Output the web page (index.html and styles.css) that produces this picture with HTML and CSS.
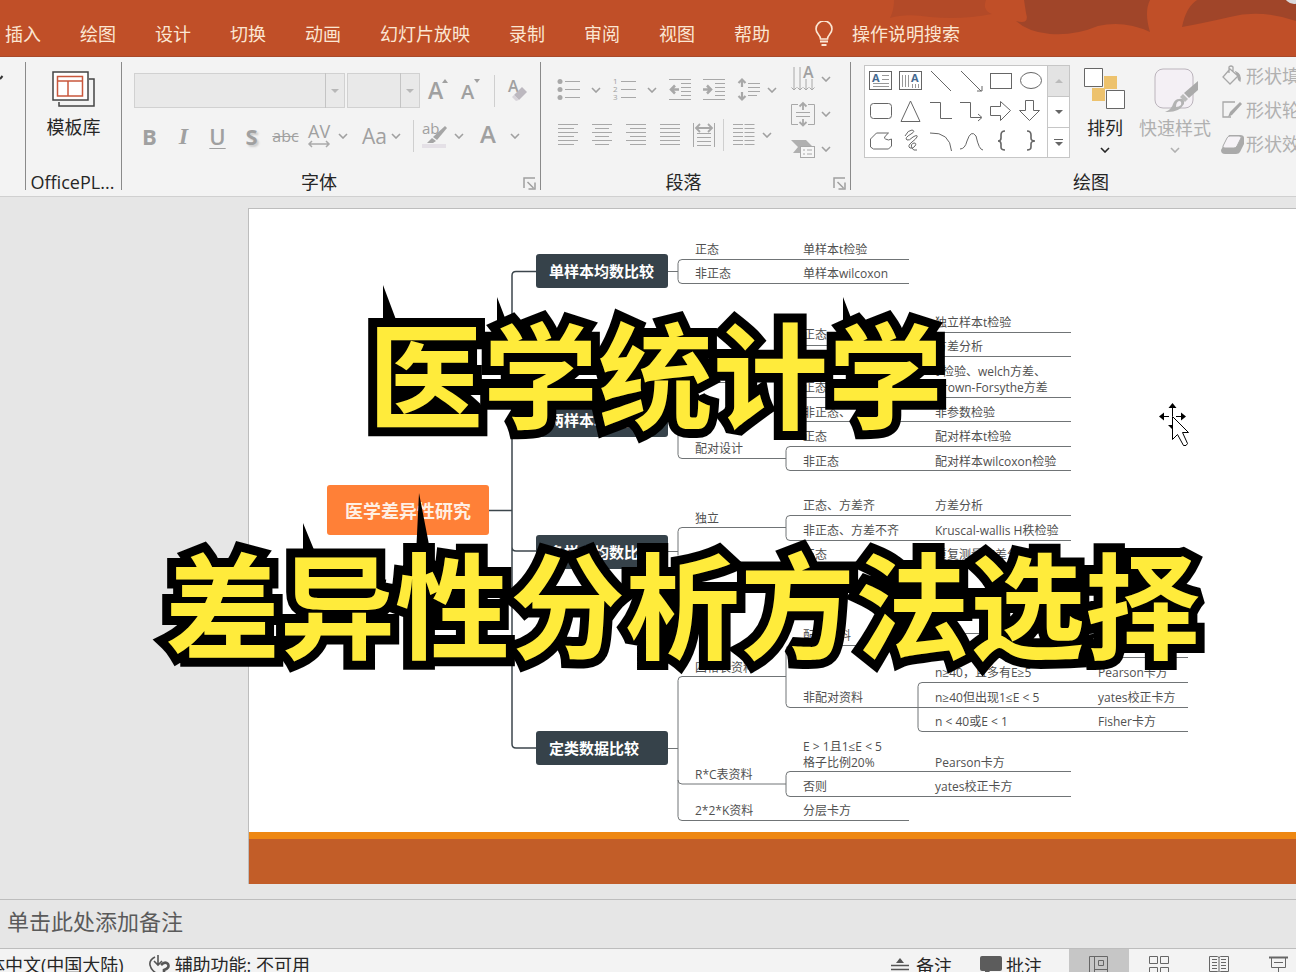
FILE: index.html
```html
<!DOCTYPE html>
<html lang="zh-CN">
<head>
<meta charset="utf-8">
<title>医学统计学 差异性分析方法选择</title>
<link rel="stylesheet" href="styles.css">
</head>
<body>
<svg class="defs" aria-hidden="true">
  <symbol id="chev" viewBox="0 0 10 6"><path d="M1 1l4 4 4-4" fill="none" stroke="currentColor" stroke-width="1.6"/></symbol>
  <symbol id="launch" viewBox="0 0 13 13"><path d="M1 11V1h11M4.500 5l6 6M12 5.500V12H5.500" fill="none" stroke="currentColor" stroke-width="1.500"/></symbol>
</svg>
<div class="app">
  <header class="titlebar">
    <svg class="swirl" viewBox="0 0 432 57" aria-hidden="true">
      <path d="M30 0h92q-4 10 6 14q-30 6-62 3q-24-4-40 1q4-8 4-18z" fill="#b34a28"/>
      <path d="M160 0h126q-6 12 0 32q-26-12-52-6q-24 10-48 8q-22-2-34-13q14 4 10-8z" fill="#a04529"/>
      <path d="M333 0h99v21q-36-12-66-4q-26 6-48 10q4-20 15-27z" fill="#a04529"/>
      <circle cx="430" cy="-6" r="10" fill="#d9d9dc"/>
    </svg>
    <nav class="tabs">
      <a href="#insert">插入</a><a href="#draw">绘图</a><a href="#design">设计</a><a href="#transition">切换</a><a href="#animation">动画</a><a href="#show">幻灯片放映</a><a href="#record">录制</a><a href="#review">审阅</a><a href="#view">视图</a><a href="#help">帮助</a>
      <a class="tellme" href="#search">
        <svg width="18" height="26" viewBox="0 0 18 26" fill="none" stroke="currentColor" stroke-width="1.600"><path d="M5.500 18c0-4-4.500-5-4.500-10a8 8 0 0 1 16 0c0 5-4.500 6-4.500 10z"/><path d="M5 20.500h8M6.500 24h5" stroke-width="2"/></svg>操作说明搜索</a>
    </nav>
  </header>

  <section class="ribbon">
    <div class="group edge"><svg width="3" height="6" viewBox="0 0 3 6"><path d="M0 4l2.500-3" stroke="#333" stroke-width="2"/></svg></div>

    <div class="group office">
      <div class="body">
        <button class="big">
          <svg width="43" height="38" viewBox="0 0 43 38" fill="none"><path d="M37 9h5v27H7v-4" stroke="#444" stroke-width="1.500"/><rect x="1" y="2" width="35" height="28" fill="#fff" stroke="#444" stroke-width="1.500"/><path d="M5.500 6.500h25v19.500h-25zM5.500 11h25M16 11v15" stroke="#c9573c" stroke-width="1.500"/></svg>
          <span>模板库</span>
        </button>
      </div>
      <div class="label">OfficePL...</div>
    </div>

    <div class="group font">
      <div class="body">
        <div class="row">
          <span class="combo family"><select aria-label="字体" disabled><option></option></select><i></i></span>
          <span class="combo size"><select aria-label="字号" disabled><option></option></select><i></i></span>
          <span class="fonttools">
            <button aria-label="增大字号"><svg width="20" height="24" viewBox="0 0 20 24"><text x="0" y="20" font-size="23" class="ic sb">A</text><path d="M14 4l3-4 3 4z" fill="#a0a0a0"/></svg></button>
            <button aria-label="减小字号"><svg width="20" height="24" viewBox="0 0 20 24"><text x="0" y="20" font-size="20" class="ic sb">A</text><path d="M13 0h6l-3 4z" fill="#a0a0a0"/></svg></button>
            <i class="sep"></i>
            <button aria-label="清除格式"><svg width="22" height="24" viewBox="0 0 22 24"><text x="0" y="13" font-size="16" class="ic sb">A</text><path d="M14 8l5 5-8 8-5-5z" fill="#bcb8bf"/><path d="M6 16l-2 2 4 4 3-1z" fill="#d8d4da"/></svg></button>
          </span>
        </div>
        <div class="row">
          <button class="fmt b">B</button><button class="fmt i">I</button><button class="fmt u">U</button><button class="fmt s">S</button><button class="fmt st">abc</button>
          <button class="split av" aria-label="字符间距"><svg width="24" height="24" viewBox="0 0 24 24"><text x="0" y="14" font-size="18" class="ic">AV</text><path d="M1 20h20M4 17l-3 3 3 3M18 17l3 3-3 3" fill="none" stroke="#aaa" stroke-width="1.500"/></svg><svg class="ch"><use href="#chev"/></svg></button>
          <button class="split aa"><span>Aa</span><svg class="ch"><use href="#chev"/></svg></button>
          <i class="sep"></i>
          <button class="split" aria-label="突出显示"><svg width="26" height="28" viewBox="0 0 26 28"><text x="0" y="12" font-size="15" class="ic">ab</text><path d="M23 4l2 2-10 12-4-3z" fill="#a5a5a5"/><path d="M10 16l4 3-3 2H5z" fill="#a5a5a5"/><rect x="0" y="22" width="24" height="4" fill="#e4e0e6"/></svg><svg class="ch"><use href="#chev"/></svg></button>
          <button class="split color" aria-label="字体颜色"><svg width="24" height="24" viewBox="0 0 24 24"><text x="4" y="19" font-size="24" class="ic sb">A</text></svg><svg class="ch"><use href="#chev"/></svg></button>
        </div>
      </div>
      <div class="label">字体</div>
      <button class="launcher" aria-label="字体设置"><svg width="13" height="13"><use href="#launch"/></svg></button>
    </div>

    <div class="group para">
      <div class="body cols">
        <div class="left">
          <div class="row wide">
            <button class="split far" aria-label="项目符号"><svg width="24" height="24" viewBox="0 0 24 24" class="ln"><path d="M8 3.500h15M8 11.500h15M8 19.500h15"/><g fill="#a8a8a8" stroke="none"><circle cx="3" cy="3.500" r="2.500"/><circle cx="3" cy="11.500" r="2.500"/><circle cx="3" cy="19.500" r="2.500"/></g></svg><svg class="ch"><use href="#chev"/></svg></button>
            <button class="split far" aria-label="编号"><svg width="24" height="24" viewBox="0 0 24 24" class="ln"><path d="M8 3.500h15M8 11.500h15M8 19.500h15"/><g class="ic" stroke="none" font-size="8"><text x="0" y="6">1</text><text x="0" y="14">2</text><text x="0" y="22">3</text></g></svg><svg class="ch"><use href="#chev"/></svg></button>
            <button aria-label="减少缩进"><svg width="22" height="24" viewBox="0 0 22 24" class="ln"><path d="M0 1.500h22M12 5.500h10M12 9.500h10M12 13.500h10M12 17.500h10M0 21.500h22"/><path d="M10 11.500H2M6 7.500l-4 4 4 4" stroke-width="2.500"/></svg></button>
            <button aria-label="增加缩进"><svg width="22" height="24" viewBox="0 0 22 24" class="ln"><path d="M0 1.500h22M12 5.500h10M12 9.500h10M12 13.500h10M12 17.500h10M0 21.500h22"/><path d="M0 11.500h8M4 7.500l4 4-4 4" stroke-width="2.500"/></svg></button>
            <button class="split" aria-label="行距"><svg width="24" height="24" viewBox="0 0 24 24" class="ln"><path d="M11 5.500h12M11 9.500h12M11 13.500h12M11 17.500h9"/><path d="M5 1v8M1.500 5L5 1.500 8.500 5M5 22v-8M1.500 18L5 21.500 8.500 18" stroke-width="2.200"/></svg><svg class="ch"><use href="#chev"/></svg></button>
          </div>
          <div class="row wide">
            <button aria-label="左对齐"><svg width="22" height="24" viewBox="0 0 22 24" class="ln"><path d="M1 1.500h20M1 5.500h16M1 9.500h20M1 13.500h16M1 17.500h20M1 21.500h16"/></svg></button>
            <button aria-label="居中"><svg width="22" height="24" viewBox="0 0 22 24" class="ln"><path d="M1 1.500h20M4 5.500h14M1 9.500h20M4 13.500h14M1 17.500h20M4 21.500h14"/></svg></button>
            <button aria-label="右对齐"><svg width="22" height="24" viewBox="0 0 22 24" class="ln"><path d="M1 1.500h20M5 5.500h16M1 9.500h20M5 13.500h16M1 17.500h20M5 21.500h16"/></svg></button>
            <button aria-label="两端对齐"><svg width="22" height="24" viewBox="0 0 22 24" class="ln"><path d="M1 1.500h20M1 5.500h20M1 9.500h20M1 13.500h20M1 17.500h20M1 21.500h20"/></svg></button>
            <button aria-label="分散对齐"><svg width="22" height="24" viewBox="0 0 22 24" class="ln"><path d="M.5 0v24M21.500 0v24M4 10.500h14M4 14.500h14M4 18.500h14M4 22.500h14"/><path d="M3 5h16M7 1L3 5l4 4M15 1l4 4-4 4" stroke-width="1.800"/></svg></button>
            <i class="sep tight"></i>
            <button class="split" aria-label="分栏"><svg width="24" height="24" viewBox="0 0 24 24" class="ln"><path d="M1 1.500h10M1 5.500h10M1 9.500h10M1 13.500h10M1 17.500h10M1 21.500h10M12.500 1.500h10M12.500 5.500h10M12.500 9.500h10M12.500 13.500h10M12.500 17.500h10M12.500 21.500h10"/></svg><svg class="ch"><use href="#chev"/></svg></button>
          </div>
        </div>
        <div class="stack">
          <button class="split" aria-label="文字方向"><svg width="24" height="26" viewBox="0 0 24 26" class="ln"><path d="M3 1v23M9 1v23M15 13v11M21 13v11M.5 21.500L3 24l2.500-2.500M6.500 21.500L9 24l2.500-2.500M12.500 21.500L15 24l2.500-2.500M18.500 21.500L21 24l2.500-2.500"/><text x="12" y="12" font-size="16" class="ic sb" stroke="none">A</text></svg><svg class="ch"><use href="#chev"/></svg></button>
          <button class="split" aria-label="对齐文本"><svg width="24" height="26" viewBox="0 0 24 26" class="ln"><path d="M7 3.500H.5v20H7M17 3.500h6.500v20H17M5 11.500h14M5 15.500h14"/><path d="M12 2v7M8.500 5.500L12 2l3.500 3.500M12 18v6M8.500 21L12 24.500l3.500-3.500" stroke-width="1.800"/></svg><svg class="ch"><use href="#chev"/></svg></button>
          <button class="split" aria-label="SmartArt"><svg width="24" height="26" viewBox="0 0 24 26" class="ln"><path d="M0 4h15l6 6H9v7H2l5-6z" fill="#b0b0b0" stroke="none"/><rect x="9.500" y="10.500" width="14" height="11" fill="#f7f7f7"/><path d="M12 14h2M16 14h5M12 18h2M16 18h5"/></svg><svg class="ch"><use href="#chev"/></svg></button>
        </div>
      </div>
      <div class="label">段落</div>
      <button class="launcher" aria-label="段落设置"><svg width="13" height="13"><use href="#launch"/></svg></button>
    </div>

    <div class="group drawing">
      <div class="body cols">
        <div class="gallery">
          <svg class="shapes" width="182" height="90" viewBox="865 66 182 90" fill="none" stroke="#666" stroke-width="1" role="img" aria-label="形状">
            <rect x="869.500" y="71.500" width="22" height="18"/><path d="M882 75.500h7M882 79.500h7M873 83.500h16M873 86.500h16" stroke="#999"/><text x="872" y="82" font-size="11" class="bl">A</text>
            <rect x="899.500" y="71.500" width="22" height="18"/><path d="M902.500 75v12M905.500 75v12M908.500 75v12M912.500 84v4M915.500 84v4M918.500 84v4" stroke="#999"/><text x="911" y="82" font-size="11" class="bl">A</text>
            <path d="M931 71l20 20M961 71l20 20M982 86v5h-5"/>
            <rect x="990.500" y="73.500" width="21" height="15"/><ellipse cx="1031" cy="80.500" rx="10.500" ry="8"/>
            <rect x="870.500" y="103.500" width="21" height="15" rx="3"/><path d="M910.500 101l9.500 20.500h-19z"/>
            <path d="M930 102.500h10.500v16H952M960 102.500h10.500v15H981M978 114l4 3.500-4 3.500"/>
            <path d="M990.500 106.500h10v-5l10 9-10 10v-5h-10zM1025.500 100.500h8v10h6l-10 10-10-10h6z"/>
            <path d="M870.500 147v-8l6-6h12q-6 5-3 6 3 2 6 0v7l-3 3h-15z"/>
            <path d="M905 136q3-6 7-6 4 1-1 4-7 4-4 6 2 1 6-3 5-3 4 0-1 2-5 5-5 4-2 6 3 1 5-2 2-3-1-3-4 1-2 5 1 3 5 2"/>
            <path d="M930 133q20-1 21.500 18M960 149q5 0 7-8 4-12 9-5 3 14 7 14"/>
            <path d="M1005 131q-4 0-4 4v3q0 3-3 3 3 0 3 3v3q0 3 4 3M1027 131q4 0 4 4v3q0 3 4 3-4 0-4 3v3q0 3-4 3" stroke-width="1.600"/>
          </svg>
          <div class="scroll"><button class="off" aria-label="上一行"><i class="tri up"></i></button><button aria-label="下一行"><i class="tri"></i></button><button class="more" aria-label="更多"><i class="tri"></i></button></div>
        </div>
        <button class="big arrange">
          <svg width="42" height="42" viewBox="0 0 42 42"><path d="M20 8h13v13H20zM8 20h13v13H8z" fill="#edc26d"/><path d="M.5.500h18v18H.5zM22.500 22.500h18v18h-18z" fill="#fff" stroke="#666"/></svg>
          <span>排列</span><svg class="ch"><use href="#chev"/></svg>
        </button>
        <button class="big quick">
          <svg width="46" height="46" viewBox="0 0 46 46"><rect x="3" y="1" width="38" height="39" rx="8" fill="#f4f0f5" stroke="#bbb4bc"/><path d="M46 13v9l-9 8-5-5z" fill="#aaa"/><path d="M31 26l5 5-3 3-5-5z" fill="#bbb"/><path d="M27 31q6-1 5 5-5 9-19 8 7-3 8-8 2-5 6-5z" fill="#b3b3b3"/><path d="M27 33q3 0 2 4-2 2-5 2 0-5 3-6z" fill="#f4f0f5"/></svg>
          <span>快速样式</span><svg class="ch"><use href="#chev"/></svg>
        </button>
        <div class="styles">
          <button><svg width="20" height="22" viewBox="0 0 20 22" fill="none" stroke="#a8a8a8" stroke-width="1.300"><path d="M8 4l8 7-8 8-7-7zM7 8V2q2-2 4 0v5"/><path d="M14 7q5 2 4 9-2-1-2-5z" fill="#a8a8a8"/></svg>形状填充</button>
          <button><svg width="20" height="22" viewBox="0 0 20 22" fill="none" stroke="#a8a8a8" stroke-width="1.300"><path d="M13 3H1v15h8"/><path d="M18 3l2 2L10 16l-4 2 2-5z" fill="#a8a8a8" stroke="none"/></svg>形状轮廓</button>
          <button><svg width="24" height="22" viewBox="3 0 24 22"><path d="M10 2h11q4 0 4 3v6l-4 8q-1 2-4 2H6q-4 0-4-4z" fill="#aaa"/><path d="M11 3h9q3 0 2 2l-4 8q-1 2-3 2H6q-3 0-2-2l4-8q1-2 3-2z" fill="#f5f2f6" stroke="#aaa"/></svg>形状效果</button>
        </div>
      </div>
      <div class="label">绘图</div>
    </div>
  </section>

  <main class="workspace">
    <div class="slide">
      <svg class="map" width="1047" height="623" viewBox="249 209 1047 623">
        <g class="trunk">
          <path d="M489 510.500h23M536 271.500h-20q-4 0-4 4V744q0 4 4 4h20M512 416q0 4 4 4h20M512 547q0 4 4 4h20"/>
        </g>
        <g class="twig">
          <path d="M668 271.500h10M909 259.500H682q-4 0-4 4v16q0 4 4 4h227"/>
          <path d="M668 420.500h10M786 382.500H682q-4 0-4 4v68q0 4 4 4h104"/>
          <path d="M918 345.500H790q-4 0-4 4v68q0 4 4 4h281M786 397.500h285M1071 332.500H922q-4 0-4 4v16q0 4 4 4h149"/>
          <path d="M1071 446.500H790q-4 0-4 4v16q0 4 4 4h281"/>
          <path d="M668 551.500h10M786 527.500H682q-4 0-4 4v24M1071 515.500H790q-4 0-4 4v17q0 4 4 4h281"/>
          <path d="M668 748.500h10M786 676.500H682q-4 0-4 4v136q0 4 4 4h227M678 780q0 4 4 4h104"/>
          <path d="M918 645.500H790q-4 0-4 4v54q0 4 4 4h398M1188 633.500H922q-4 0-4 4v16q0 4 4 4h266"/>
          <path d="M1188 682.500H922q-4 0-4 4v41q0 4 4 4h266M1071 771.500H790q-4 0-4 4v17q0 4 4 4h281"/>
        </g>
        <rect class="root" x="327" y="485" width="162" height="50" rx="3"/>
        <g class="box"><rect x="536" y="254" width="132" height="34" rx="3"/><rect x="536" y="404" width="132" height="33" rx="3"/><rect x="536" y="535" width="132" height="34" rx="3"/><rect x="536" y="731" width="132" height="34" rx="3"/></g>
        <text class="rt" x="345" y="518">医学差异性研究</text>
        <g class="bt"><text x="549" y="277">单样本均数比较</text><text x="549" y="426">两样本均数比较</text><text x="549" y="558">多样本均数比较</text><text x="549" y="754">定类数据比较</text></g>
        <g class="lf">
          <text x="695" y="254">正态</text><text x="803" y="254">单样本t检验</text>
          <text x="695" y="278">非正态</text><text x="803" y="278">单样本wilcoxon</text>
          <text x="803" y="339">正态</text><text x="935" y="327">独立样本t检验</text><text x="935" y="351">方差分析</text>
          <text x="803" y="392">正态</text><text x="935" y="376">t'检验、welch方差、</text><text x="935" y="392">Brown-Forsythe方差</text>
          <text x="803" y="417">非正态、</text><text x="935" y="417">非参数检验</text>
          <text x="695" y="453">配对设计</text><text x="803" y="441">正态</text><text x="935" y="441">配对样本t检验</text>
          <text x="803" y="466">非正态</text><text x="935" y="466">配对样本wilcoxon检验</text>
          <text x="695" y="523">独立</text><text x="803" y="510">正态、方差齐</text><text x="935" y="510">方差分析</text>
          <text x="803" y="535">非正态、方差不齐</text><text x="935" y="535">Kruscal-wallis H秩检验</text>
          <text x="803" y="559">正态</text><text x="935" y="559">重复测量方差分析</text>
          <text x="695" y="672">四格表资料</text><text x="803" y="640">配对资料</text><text x="1098" y="653">Pearson</text>
          <text x="935" y="677">n≥40，且多有E≥5</text><text x="1098" y="677">Pearson卡方</text>
          <text x="803" y="702">非配对资料</text><text x="935" y="702">n≥40但出现1≤E &lt; 5</text><text x="1098" y="702">yates校正卡方</text>
          <text x="935" y="726">n &lt; 40或E &lt; 1</text><text x="1098" y="726">Fisher卡方</text>
          <text x="803" y="751">E &gt; 1且1≤E &lt; 5</text><text x="803" y="767">格子比例20%</text><text x="935" y="767">Pearson卡方</text>
          <text x="695" y="779">R*C表资料</text><text x="803" y="791">否则</text><text x="935" y="791">yates校正卡方</text>
          <text x="695" y="815">2*2*K资料</text><text x="803" y="815">分层卡方</text>
        </g>
        <g class="cursor">
          <path d="M1172.500 403l4 5h-8zM1159 416.500l5-4v8zM1186 416.500l-5-4v8zM1172 429l-4-4h4z"/><path d="M1172.500 408v8M1164 416.500h5M1176 416.500h5" stroke="#000"/>
          <path d="M1172.500 416.500v23l5-5 6 11q3 1 4-2l-5-11h6z" fill="#fff" stroke="#000"/>
        </g>
      </svg>
      <div class="band"></div>
    </div>
  </main>

  <section class="notes">单击此处添加备注</section>

  <footer class="status">
    <span class="lang">简体中文(中国大陆)</span>
    <button class="access"><svg width="24" height="24" viewBox="0 0 24 24" fill="none" stroke="#555" stroke-width="1.600"><path d="M7 4Q1 7 2 12q1 5 6 8M10 2v9M6 8l4 4 4-4"/><path d="M13 12q4-4 7-1 2 4-4 6v4" stroke-width="2.600"/></svg>辅助功能: 不可用</button>
    <div class="right">
      <button class="note"><svg width="18" height="20" viewBox="0 0 18 20"><path d="M5 7l4-5 4 5z" fill="#555"/><path d="M0 9.500h18M0 13.500h18" stroke="#555" stroke-width="1.400"/></svg>备注</button>
      <button class="note cm"><svg width="22" height="24" viewBox="0 0 22 24"><path d="M2 2h18q2 0 2 2v11q0 2-2 2H10l-5 6v-6H2q-2 0-2-2V4q0-2 2-2z" fill="#5c5c5c"/></svg>批注</button>
      <div class="views">
        <button class="on" aria-label="普通"><svg width="20" height="20" viewBox="0 0 20 20"><path d="M.5.500h18v18H.5zM5.500.500v18M5.500 13.500h13M9.500 4.500h5v5h-5z"/></svg></button>
        <button aria-label="幻灯片浏览"><svg width="20" height="20" viewBox="0 0 20 20"><path d="M.5.500h8v7h-8zM11.500.500h8v7h-8zM.5 11.500h8v7h-8zM11.500 11.500h8v7h-8z"/></svg></button>
        <button aria-label="阅读视图"><svg width="20" height="20" viewBox="0 0 20 20"><path d="M.5.500h8l1.500 1 1.500-1h8v15h-8l-1.500 1-1.500-1h-8zM10 1v16M3 3.500h5M3 6.500h5M3 9.500h5M3 12.500h5M12 3.500h5M12 6.500h5M12 9.500h5M12 12.500h5"/></svg></button>
        <button aria-label="幻灯片放映"><svg width="20" height="20" viewBox="0 0 20 20"><path d="M0 1.500h19" stroke-width="2"/><path d="M2.500 2v9.500h14V2M5 6.500h9M9.500 12v5"/></svg></button>
      </div>
    </div>
  </footer>

  <svg class="caption" width="1296" height="420" viewBox="0 280 1296 420">
    <path d="M383 285l15 40h-15zM497 297l10 26h-10zM843 297l10 26h-10zM303 523l14 34h-14zM419 493l12 62h-15z"/>
    <text x="368" y="420">医学统计学</text>
    <text x="165" y="650">差异性分析方法选择</text>
  </svg>
</div>
</body>
</html>
```
FILE: styles.css
```css
* { box-sizing: border-box; }
body { margin: 0; font: 18px/24px "Open Sans", "Noto Sans CJK SC", sans-serif; color: #262626; overflow: hidden; }
button { font: inherit; color: inherit; background: none; border: 0; padding: 0; display: flex; align-items: center; white-space: nowrap; }
svg { display: block; flex: none; }
.defs { position: absolute; width: 0; height: 0; }
.app { position: relative; display: flex; flex-direction: column; height: 100vh; overflow: hidden; }

.titlebar { position: relative; flex: 0 0 57px; background: #c04f28; border-bottom: 1px solid #a9492a; }
.swirl { position: absolute; right: 0; top: 0; width: 432px; height: 57px; }
.tabs { position: relative; display: flex; align-items: center; gap: 39px; padding: 21px 0 0 5px; }
.tabs a { color: #fbe6d3; text-decoration: none; white-space: nowrap; }
.tabs .tellme { display: flex; align-items: center; gap: 19px; margin-left: 6px; }

.ribbon { display: flex; flex: 0 0 140px; padding: 5px 0 6px; background: #f3f3f3; border-bottom: 1px solid #d0d0d0; overflow: hidden; }
.group { position: relative; display: grid; grid-template-rows: 1fr 16px; flex: none; border-right: 1px solid #8a8a8a; }
.label { line-height: 16px; text-align: center; white-space: nowrap; }
.edge { width: 26px; padding-top: 13px; }
.office { width: 96px; }
.office .label { padding-right: 2px; }
.font { width: 419px; color: #a0a0a0; }
.para { width: 310px; color: #a0a0a0; }
.drawing { width: 480px; border: 0; }
.font .label, .para .label { color: #262626; padding-right: 24px; }
.launcher { position: absolute; right: 4px; bottom: 0; }
.ribbon svg { overflow: visible; }
.cols { display: flex; }
.ch { width: 10px; height: 6px; }
.ic { font-family: "Open Sans", sans-serif; fill: #a0a0a0; }
.sb { font-weight: 600; }
.bl { font-weight: 700; fill: #44688f; stroke: none; }
.ln { fill: none; stroke: #a8a8a8; stroke-width: 1; }
.row { display: flex; align-items: center; }
.sep { width: 1px; height: 32px; background: #cfcfcf; }

.big { flex-direction: column; width: 100%; padding-top: 8px; }
.big span { margin-top: 7px; }

.font .body { display: flex; flex-direction: column; gap: 13px; padding: 11px 0 0 12px; }
.font .row:nth-child(1) { height: 35px; }
.font .row:nth-child(2), .left .row:nth-child(2) { height: 30px; }
.combo { position: relative; height: 35px; margin-right: 2px; }
.combo select { width: 100%; height: 100%; appearance: none; background: #e5e5e5; border: 1px solid #c4c4c4; border-radius: 0; }
.combo i { position: absolute; right: 0; top: 0; width: 20px; height: 35px; border-left: 1px solid #c4c4c4; }
.combo i::after { content: ""; position: absolute; left: 5px; top: 16px; border: 4px solid transparent; border-top-color: #b8b8b8; border-bottom: 0; }
.family { width: 211px; }
.size { width: 73px; }
.fonttools { display: flex; align-items: center; gap: 13px; margin-left: 6px; }
.fmt { width: 34px; justify-content: center; padding-right: 3px; font-size: 22px; }
.b { font-weight: 700; }
.i { font-family: "Liberation Serif", serif; font-style: italic; font-weight: 700; font-size: 24px; }
.u { text-decoration: underline; text-decoration-thickness: 1px; text-underline-offset: 3px; font-weight: 600; }
.s { font-weight: 700; text-shadow: 2px 2px 2px #ccc; }
.st { font-size: 16px; text-decoration: line-through; }
.split { gap: 6px; }
.split.far { gap: 10px; }
.av { margin: 0 14px 0 4px; }
.aa { font-size: 21px; gap: 4px; margin-right: 12px; }
.font .sep + .split { margin-left: 8px; }
.color { margin-left: 12px; gap: 10px; }

.left { display: flex; flex-direction: column; gap: 13px; width: 234px; padding-top: 10px; }
.left .row:nth-child(1) { height: 35px; }
.para .body { padding-left: 16px; }
.wide { gap: 12px; }
.tight { margin: 0 -4px; }
.stack { display: grid; grid-auto-rows: 35px; margin-top: -1px; }

.drawing .body { padding: 3px 0 0 13px; align-items: flex-start; }
.gallery { display: flex; width: 206px; height: 93px; flex: none; background: #fff; border: 1px solid #c6c6c6; }
.scroll { display: grid; grid-template-rows: repeat(3, 1fr); flex: 1; border-left: 1px solid #c6c6c6; }
.scroll button { justify-content: center; }
.scroll button + button { border-top: 1px solid #c6c6c6; }
.scroll .off { background: #e3e3e3; }
.tri { border: 4px solid transparent; border-top-color: #666; border-bottom: 0; }
.tri.up { border-bottom: 4px solid #bbb; border-top: 0; }
.more { flex-direction: column; gap: 2px; }
.more::before { content: ""; width: 9px; height: 1px; background: #666; }
.arrange, .quick { flex: none; padding-top: 3px; }
.arrange { width: 50px; margin-left: 10px; }
.quick { width: 72px; margin-left: 9px; color: #b0b0b0; }
.arrange span { margin: 6px 0 7px; }
.quick span { margin: 2px 0 7px; }
.styles { display: grid; grid-auto-rows: 34px; margin: -6px 0 0 11px; color: #b0b0b0; }
.styles button { gap: 4px; }
.styles button:last-child { gap: 0; }

.workspace { flex: 1 1 auto; min-height: 0; overflow: hidden; padding: 11px 0 0 248px; background: #e6e6e6; }
.slide { background: #fff; border: 1px solid #bdbdbd; border-width: 1px 0 0 1px; overflow: hidden; }
.band { height: 52px; background: #c25d28; border-top: 7px solid #ee8712; }
.trunk { fill: none; stroke: #3c464c; stroke-width: 1.5; }
.twig { fill: none; stroke: #707476; stroke-width: 1; }
.root { fill: #ff8037; }
.box { fill: #36424a; }
.rt { font-size: 18px; font-weight: 700; fill: #fff0e4; }
.bt { font-size: 15px; font-weight: 700; fill: #fff; }
.lf { font-size: 12px; fill: #505050; }

.notes { flex: 0 0 49px; padding: 0 7px; border-top: 1px solid #bdbdbd; background: #e6e6e6; color: #5a5a5a; font-size: 22px; line-height: 43px; white-space: nowrap; }
.status { display: flex; align-items: flex-start; flex: 0 0 24px; overflow: hidden; background: #f3f3f3; border-top: 1px solid #bdbdbd; line-height: 32px; white-space: nowrap; }
.lang { margin-left: -31px; }
.access { gap: 3px; margin-left: 24px; }
.right { display: flex; margin: 0 -13px 0 auto; }
.note { gap: 7px; }
.cm { gap: 4px; margin: 0 27px 0 28px; }
.views { display: grid; grid-template-columns: repeat(4, 60px); }
.views button { height: 34px; justify-content: center; }
.views svg { fill: none; stroke: #666; }
.on { background: #c6c6c6; }

.caption { position: absolute; left: 0; top: 280px; pointer-events: none; }
.caption text { font: 700 115px "Noto Sans CJK SC", sans-serif; fill: #ffeb3b; stroke: #000; stroke-width: 18px; stroke-linejoin: miter; stroke-miterlimit: 2; paint-order: stroke; }
```
